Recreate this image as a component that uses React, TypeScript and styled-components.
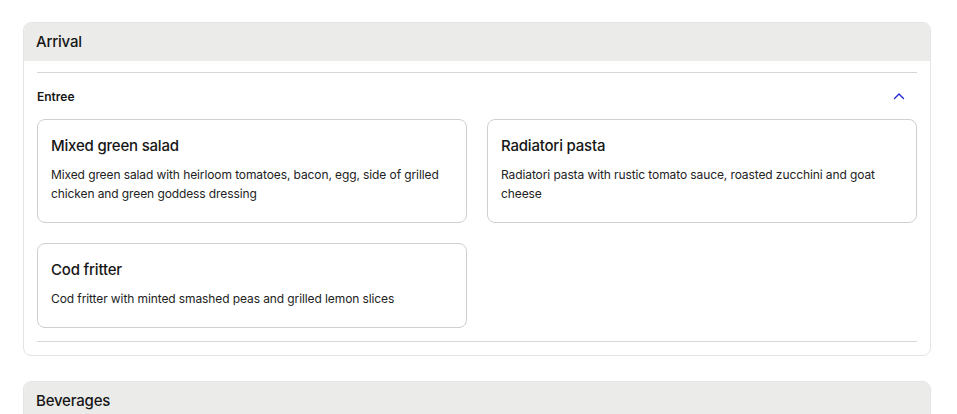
import React from "react";
import styled, { createGlobalStyle } from "styled-components";

const GlobalStyle = createGlobalStyle`
  body {
    margin: 0;
    background: #fff;
    font-family: Inter, "Noto Sans", sans-serif;
    color: #161616;
  }
`;

interface Dish {
  name: string;
  description: string;
}

const entrees: Dish[] = [
  {
    name: "Mixed green salad",
    description:
      "Mixed green salad with heirloom tomatoes, bacon, egg, side of grilled chicken and green goddess dressing",
  },
  {
    name: "Radiatori pasta",
    description:
      "Radiatori pasta with rustic tomato sauce, roasted zucchini and goat cheese",
  },
  {
    name: "Cod fritter",
    description: "Cod fritter with minted smashed peas and grilled lemon slices",
  },
];

const Page = styled.div`
  width: 908px;
  padding: 22px 0 0 23px;
  display: flex;
  flex-direction: column;
  gap: 25px;
`;

const Panel = styled.section`
  border: 1px solid #e4e4e2;
  border-radius: 8px;
  overflow: hidden;
`;

const PanelHeader = styled.header`
  height: 38px;
  background: #ebebe9;
  display: flex;
  align-items: center;
  padding: 0 12px;
  font-size: 15px;
  font-weight: 500;
  letter-spacing: -0.2px;
  line-height: 18px;
  & > span {
    margin-top: -1px;
  }
`;

const PanelBody = styled.div`
  padding: 11px 13px 13px;
`;

const Section = styled.div`
  border-top: 1px solid #d6d6d4;
  border-bottom: 1px solid #d6d6d4;
  padding-bottom: 13px;
`;

const SectionHead = styled.div`
  height: 46px;
  display: flex;
  align-items: center;
  justify-content: space-between;
  font-size: 12px;
  font-weight: 600;
  padding-right: 11px;
`;

const Grid = styled.div`
  display: grid;
  grid-template-columns: 430px 430px;
  gap: 20px;
`;

const Card = styled.div`
  border: 1px solid #cfcfcd;
  border-radius: 8px;
  padding: 15px 13px 19px;
`;

const CardTitle = styled.h3`
  margin: 0 0 8px;
  font-size: 15px;
  font-weight: 500;
  letter-spacing: -0.2px;
  line-height: 22px;
`;

const CardText = styled.p`
  margin: 0;
  font-size: 12px;
  line-height: 19px;
  letter-spacing: -0.1px;
  color: #222;
`;

const Chevron = () => (
  <svg width="14" height="14" viewBox="0 0 14 14" fill="none">
    <path
      d="M2.5 9.5 7 5l4.5 4.5"
      stroke="#2424d8"
      strokeWidth="1.4"
      strokeLinecap="round"
      strokeLinejoin="round"
    />
  </svg>
);

const App: React.FC = () => (
  <>
    <GlobalStyle />
    <Page>
      <Panel>
        <PanelHeader>
          <span>Arrival</span>
        </PanelHeader>
        <PanelBody>
          <Section>
            <SectionHead>
              Entree
              <Chevron />
            </SectionHead>
            <Grid>
              {entrees.map((d) => (
                <Card key={d.name}>
                  <CardTitle>{d.name}</CardTitle>
                  <CardText>{d.description}</CardText>
                </Card>
              ))}
            </Grid>
          </Section>
        </PanelBody>
      </Panel>
      <Panel>
        <PanelHeader>
          <span>Beverages</span>
        </PanelHeader>
        <PanelBody />
      </Panel>
    </Page>
  </>
);

export default App;
